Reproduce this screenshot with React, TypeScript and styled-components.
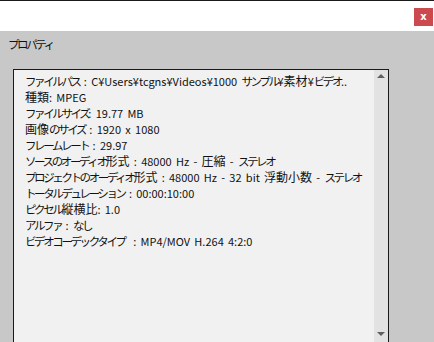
import React from "react";
import styled, { createGlobalStyle } from "styled-components";

const Global = createGlobalStyle`
  html, body { margin: 0; padding: 0; width: 434px; height: 342px; overflow: hidden; background: #c8c8c8; }
  * { box-sizing: border-box; }
`;

const Window = styled.div`
  width: 434px;
  height: 342px;
  display: flex;
  flex-direction: column;
  border-top: 1px solid #1a1a1a;
  font-family: "Noto Sans CJK JP", sans-serif;
  color: #111;
`;

const TitleBar = styled.div`
  height: 30px;
  background: #ffffff;
  display: flex;
  justify-content: flex-end;
  align-items: flex-start;
  padding: 7px 1px 0 0;
`;

const CloseButton = styled.div`
  width: 19px;
  height: 18px;
  background: #cc4a4d;
  color: #ffffff;
  font-family: "DejaVu Sans", sans-serif;
  font-size: 10px;
  font-weight: bold;
  display: flex;
  align-items: center;
  justify-content: center;
  line-height: 1;
`;

const Panel = styled.div`
  flex: 1;
  background: #c8c8c8;
  display: flex;
  flex-direction: column;
  padding: 5px 45px 0 13px;
  min-height: 0;
`;

const PanelLabel = styled.div`
  font-size: 12px;
  line-height: 16px;
  height: 33px;
  margin-left: -5px;
`;

const Box = styled.div`
  flex: 1;
  display: flex;
  border: 1px solid #1a1a1a;
  border-bottom: none;
  min-height: 0;
`;

const Content = styled.div`
  flex: 1;
  background: #f1f1f1;
  padding: 3px 0 0 11px;
  font-size: 12px;
  line-height: 16px;
  white-space: pre;
  overflow: hidden;
`;

const Line = styled.div``;

const Kana = styled.span`
  font-size: 11.5px;
  letter-spacing: -2.4px;
`;

const Latin = styled.span`
  font-size: 11px;
  letter-spacing: 0;
  word-spacing: 1.8px;
`;

const Kanji = styled.span`
  font-size: 12px;
  letter-spacing: 0;
`;

const ScrollBar = styled.div`
  width: 14px;
  background: #e2e2e2;
  display: flex;
  flex-direction: column;
  justify-content: space-between;
  align-items: center;
  padding: 4px 0 6px;
`;

const Arrow = styled.div<{ $up?: boolean }>`
  width: 0;
  height: 0;
  border-left: 4px solid transparent;
  border-right: 4px solid transparent;
  ${(p) => (p.$up ? "border-bottom: 4px solid #606060;" : "border-top: 4px solid #606060;")}
`;

function Text({ children }: { children: string }) {
  const re = /([\u3040-\u30ff]+)|([\u0000-\u00ff]+)|([^\u0000-\u00ff\u3040-\u30ff]+)/g;
  const parts: React.ReactNode[] = [];
  let m: RegExpExecArray | null;
  let i = 0;
  while ((m = re.exec(children))) {
    if (m[1]) parts.push(<Kana key={i++}>{m[1]}</Kana>);
    else if (m[2]) parts.push(<Latin key={i++}>{m[2]}</Latin>);
    else parts.push(<Kanji key={i++}>{m[3]}</Kanji>);
  }
  return <>{parts}</>;
}

const lines = [
  "ファイルパス : C¥Users¥tcgns¥Videos¥1000 サンプル¥素材¥ビデオ..",
  "種類: MPEG",
  "ファイルサイズ: 19.77 MB",
  "画像のサイズ : 1920 x 1080",
  "フレームレート : 29.97",
  "ソースのオーディオ形式 : 48000 Hz - 圧縮 - ステレオ",
  "プロジェクトのオーディオ形式 : 48000 Hz - 32 bit 浮動小数 - ステレオ",
  "トータルデュレーション : 00:00:10:00",
  "ピクセル縦横比: 1.0",
  "アルファ : なし",
  "ビデオコーデックタイプ  : MP4/MOV H.264 4:2:0",
];

export default function App() {
  return (
    <>
      <Global />
      <Window>
        <TitleBar>
          <CloseButton>x</CloseButton>
        </TitleBar>
        <Panel>
          <PanelLabel>
            <Text>プロパティ</Text>
          </PanelLabel>
          <Box>
            <Content>
              {lines.map((l, i) => (
                <Line key={i}>
                  <Text>{l}</Text>
                </Line>
              ))}
            </Content>
            <ScrollBar>
              <Arrow $up />
              <Arrow />
            </ScrollBar>
          </Box>
        </Panel>
      </Window>
    </>
  );
}
